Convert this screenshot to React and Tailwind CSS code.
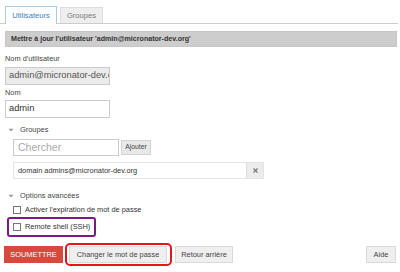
import React from 'react';

const Caret = () => (
  <svg width="8" height="6" viewBox="0 0 8 6" className="mr-[5px] ml-[2px]">
    <path d="M1.5 1.8 L4 4.5 L6.5 1.8 Z" fill="#999" />
  </svg>
);

const Check = ({ label }) => (
  <label className="flex items-center gap-[4px] text-[7.4px] leading-[10px] text-[#333] whitespace-nowrap">
    <span className="block w-[8px] h-[8px] border border-[#777] bg-white" />
    {label}
  </label>
);

const Btn = ({ children, className = '' }) => (
  <div
    className={`h-[17px] flex items-center bg-[#efefef] border border-[#d9d9d9] text-[7.4px] text-[#444] whitespace-nowrap ${className}`}
  >
    {children}
  </div>
);

export default function App() {
  return (
    <div className="w-[400px] h-[272px] bg-white overflow-hidden font-['Liberation_Sans',Arial,sans-serif] text-[#333]">
      {/* Tabs */}
      <div className="flex items-end gap-[3px] pl-[5px] h-[24px] border-b border-[#ccc] mr-[2px]">
        <div className="h-[18px] w-[52px] flex items-center justify-center text-[7.6px] text-[#3b7fc4] bg-white border border-[#a9cbe6] border-b-0 -mb-px">
          Utilisateurs
        </div>
        <div className="h-[16px] w-[43px] flex items-center justify-center text-[7.6px] text-[#777] bg-[#eee] border border-[#ddd] border-b-0">
          Groupes
        </div>
      </div>

      {/* Header */}
      <div className="mx-[5px] mt-[7px] mr-[3px] h-[16px] flex items-center px-[5px] bg-[#cdcdcd] border border-[#c6c6c6] text-[7.1px] font-bold text-[#333] whitespace-nowrap">
        Mettre à jour l'utilisateur 'admin@micronator-dev.org'
      </div>

      <div className="px-[5px]">
        <div className="mt-[7px] h-[10px] flex items-center text-[7.4px] text-[#444]">Nom d'utilisateur</div>
        <div className="mt-[3px] w-[105px] h-[18px] flex items-center px-[3px] bg-[#ebebeb] border border-[#ccc] text-[9.3px] text-[#555] overflow-hidden whitespace-nowrap">
          admin@micronator-dev.org
        </div>

        <div className="mt-[3px] h-[10px] flex items-center text-[7.4px] text-[#444]">Nom</div>
        <div className="mt-[2px] w-[105px] h-[18px] flex items-center px-[3px] bg-white border border-[#ccc] text-[9.3px] text-[#333]">
          admin
        </div>

        <div className="mt-[7px] h-[10px] flex items-center text-[7.4px] text-[#444]">
          <Caret />Groupes
        </div>

        <div className="pl-[8px]">
          <div className="mt-[4px] flex items-center gap-[2px]">
            <div className="w-[106px] h-[17px] flex items-center px-[4px] bg-white border border-[#ccc] text-[10.5px] text-[#aaa]">
              Chercher
            </div>
            <div className="h-[15px] w-[30px] flex items-center justify-center bg-[#e8e8e8] border border-[#d4d4d4] text-[6.8px] text-[#444]">
              Ajouter
            </div>
          </div>

          <div className="mt-[6px] w-[251px] h-[17px] flex items-center border border-[#e4e4e4]">
            <div className="flex-1 px-[4px] text-[7.4px] text-[#333] whitespace-nowrap">domain admins@micronator-dev.org</div>
            <div className="w-[17px] h-full flex items-center justify-center bg-[#ececec] border-l border-[#dcdcdc]">
              <svg width="5" height="5" viewBox="0 0 5 5">
                <path d="M0.5 0.5 L4.5 4.5 M4.5 0.5 L0.5 4.5" stroke="#777" strokeWidth="1.2" />
              </svg>
            </div>
          </div>
        </div>

        <div className="mt-[12px] h-[10px] flex items-center text-[7.4px] text-[#444]">
          <Caret />Options avancées
        </div>

        <div className="pl-[8px] mt-[4px]">
          <Check label="Activer l'expiration de mot de passe" />
          <div className="mt-[2px] -ml-[6px] w-[89px] h-[20px] flex items-center pl-[4px] border-2 border-[#7b1a86] rounded-[3px]">
            <Check label="Remote shell (SSH)" />
          </div>
        </div>
      </div>

      {/* Buttons */}
      <div className="mt-[6px] flex items-center pl-[4px] pr-[4px]">
        <div className="h-[17px] w-[59px] flex items-center justify-center bg-[#d9483b] text-white text-[7.4px]">
          SOUMETTRE
        </div>
        <div className="ml-[2px] pl-[2px] pr-[3px] py-[1px] border-2 border-[#e8141c] rounded-[5px]">
          <Btn className="w-[98px] justify-center">Changer le mot de passe</Btn>
        </div>
        <Btn className="ml-[3px] w-[58px] justify-center">Retour arrière</Btn>
        <Btn className="ml-auto w-[30px] justify-center">Aide</Btn>
      </div>
    </div>
  );
}
